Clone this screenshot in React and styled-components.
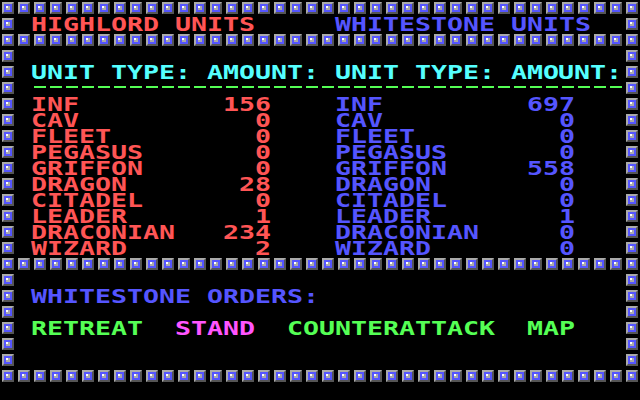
import React from "react";
import styled, { createGlobalStyle } from "styled-components";

// EGA palette
const RED = "#ff5555";
const BLUE = "#5555ff";
const CYAN = "#55ffff";
const GREEN = "#55ff55";
const MAGENTA = "#ff55ff";

const GlobalStyle = createGlobalStyle`
  html, body {
    margin: 0;
    padding: 0;
    background: #000;
  }
`;

const Screen = styled.div`
  width: 640px;
  height: 400px;
  background: #000;
  display: flex;
  flex-direction: column;
  overflow: hidden;
  font-family: "DejaVu Sans Mono", "Liberation Mono", monospace;
  font-weight: bold;
  font-size: 19px;
`;

const TileBand = styled.div`
  display: flex;
  height: 16px;
`;

const Tile = styled.span`
  flex: none;
  display: block;
  width: 12px;
  height: 12px;
  margin: 2px;
  box-sizing: border-box;
  border: 2px solid;
  border-color: #aaaaaa #555555 #555555 #aaaaaa;
  padding: 2px;
  background: ${BLUE};
`;

const Stud = styled.span`
  display: block;
  width: 4px;
  height: 4px;
  background: linear-gradient(#fff, #fff) no-repeat 0 0 / 2px 2px, #aaaaaa;
`;

const Panel = styled.div`
  display: grid;
  grid-template-columns: 16px 608px 16px;
`;

const TileColumn = styled.div`
  display: flex;
  flex-direction: column;
`;

const Body = styled.div`
  display: flex;
  flex-direction: column;
`;

const Line = styled.div`
  display: grid;
  grid-template-columns: repeat(38, 16px);
  height: 16px;
`;

const Field = styled.span`
  grid-column: ${(p) => p.$from} / ${(p) => p.$to + 1};
  justify-self: ${(p) => (p.$right ? "end" : "start")};
  display: flex;
  color: ${(p) => p.$color};
`;

const Rule = styled.span`
  grid-column: ${(p) => p.$from} / ${(p) => p.$to + 1};
  height: 16px;
  background-image: linear-gradient(
    to right,
    transparent 2px,
    ${GREEN} 2px,
    ${GREEN} 14px,
    transparent 14px
  );
  background-repeat: repeat-x;
  background-position: 0 6px;
  background-size: 16px 2px;
`;

// one text-mode cell: 16px pitch, glyph stretched wide like the 8x8 ROM font
const Glyph = styled.span`
  display: block;
  flex: none;
  width: 11.4px;
  margin-right: 4.6px;
  height: 16px;
  line-height: 16px;
  text-align: center;
  white-space: pre;
  transform-origin: 0 0;
  transform: translateX(-1px) scaleX(1.4);
`;

const Text = ({ children }) =>
  [...children].map((c, i) => <Glyph key={i}>{c}</Glyph>);

const Tiles = ({ count }) =>
  Array.from({ length: count }, (_, i) => (
    <Tile key={i}>
      <Stud />
    </Tile>
  ));

const Framed = ({ rows, children }) => (
  <Panel>
    <TileColumn>
      <Tiles count={rows} />
    </TileColumn>
    <Body>{children}</Body>
    <TileColumn>
      <Tiles count={rows} />
    </TileColumn>
  </Panel>
);

const highlord = [
  ["INF", 156],
  ["CAV", 0],
  ["FLEET", 0],
  ["PEGASUS", 0],
  ["GRIFFON", 0],
  ["DRAGON", 28],
  ["CITADEL", 0],
  ["LEADER", 1],
  ["DRACONIAN", 234],
  ["WIZARD", 2],
];

const whitestone = [
  ["INF", 697],
  ["CAV", 0],
  ["FLEET", 0],
  ["PEGASUS", 0],
  ["GRIFFON", 558],
  ["DRAGON", 0],
  ["CITADEL", 0],
  ["LEADER", 1],
  ["DRACONIAN", 0],
  ["WIZARD", 0],
];

const App = () => {
  return (
    <>
      <GlobalStyle />
      <Screen>
        <TileBand>
          <Tiles count={40} />
        </TileBand>

        <Framed rows={1}>
          <Line>
            <Field $from={2} $to={15} $color={RED}>
              <Text>HIGHLORD UNITS</Text>
            </Field>
            <Field $from={21} $to={36} $color={BLUE}>
              <Text>WHITESTONE UNITS</Text>
            </Field>
          </Line>
        </Framed>

        <TileBand>
          <Tiles count={40} />
        </TileBand>

        <Framed rows={13}>
          <Line />
          <Line>
            <Field $from={2} $to={38} $color={CYAN}>
              <Text>UNIT TYPE: AMOUNT: UNIT TYPE: AMOUNT:</Text>
            </Field>
          </Line>
          <Line>
            <Rule $from={2} $to={38} />
          </Line>
          {highlord.map(([name, amount], i) => (
            <Line key={name}>
              <Field $from={2} $to={10} $color={RED}>
                <Text>{name}</Text>
              </Field>
              <Field $from={11} $to={16} $right $color={RED}>
                <Text>{String(amount)}</Text>
              </Field>
              <Field $from={21} $to={29} $color={BLUE}>
                <Text>{whitestone[i][0]}</Text>
              </Field>
              <Field $from={30} $to={35} $right $color={BLUE}>
                <Text>{String(whitestone[i][1])}</Text>
              </Field>
            </Line>
          ))}
        </Framed>

        <TileBand>
          <Tiles count={40} />
        </TileBand>

        <Framed rows={6}>
          <Line />
          <Line>
            <Field $from={2} $to={19} $color={BLUE}>
              <Text>WHITESTONE ORDERS:</Text>
            </Field>
          </Line>
          <Line />
          <Line>
            <Field $from={2} $to={8} $color={GREEN}>
              <Text>RETREAT</Text>
            </Field>
            <Field $from={11} $to={15} $color={MAGENTA}>
              <Text>STAND</Text>
            </Field>
            <Field $from={18} $to={30} $color={GREEN}>
              <Text>COUNTERATTACK</Text>
            </Field>
            <Field $from={33} $to={35} $color={GREEN}>
              <Text>MAP</Text>
            </Field>
          </Line>
          <Line />
          <Line />
        </Framed>

        <TileBand>
          <Tiles count={40} />
        </TileBand>
      </Screen>
    </>
  );
};

export default App;
